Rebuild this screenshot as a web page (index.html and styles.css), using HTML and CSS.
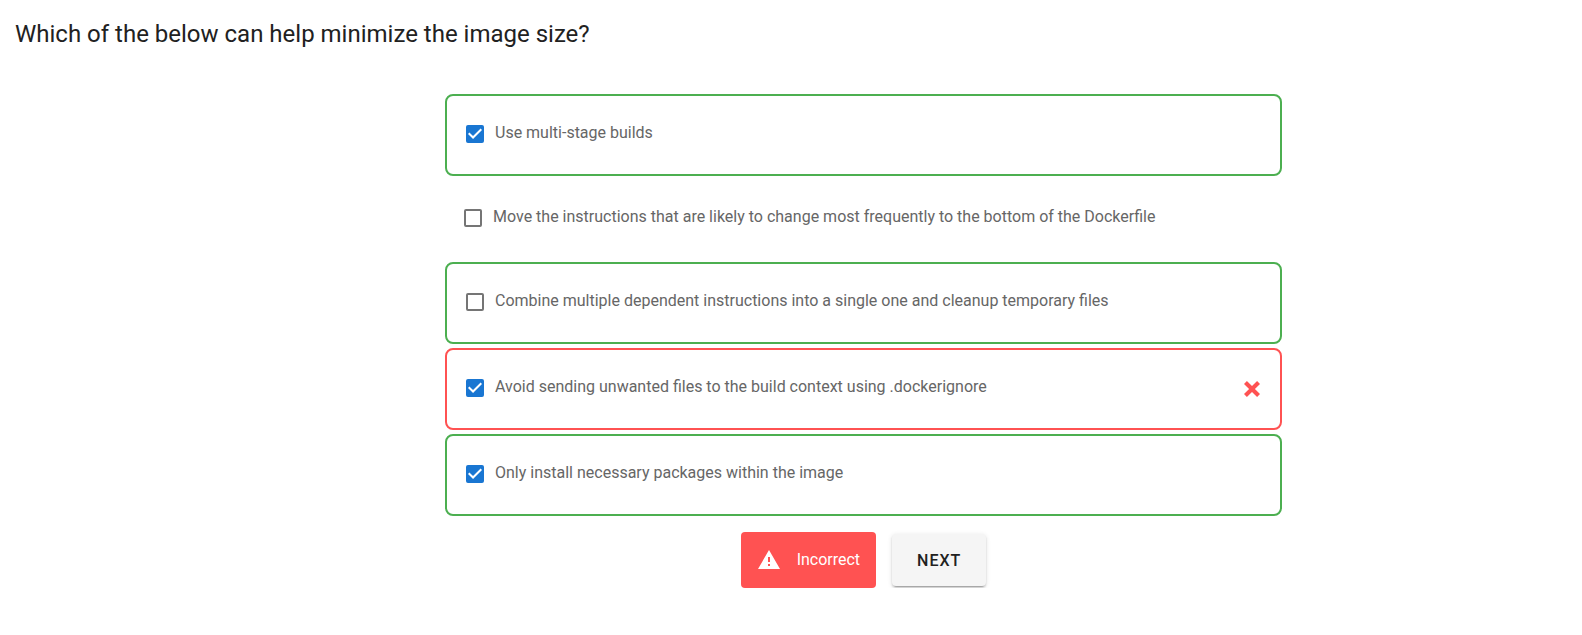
FILE: index.html
```html
<!DOCTYPE html>
<html lang="en">
<head>
<meta charset="utf-8">
<title>Quiz</title>
<link rel="stylesheet" href="styles.css">
</head>
<body>
<main class="quiz">
  <h1 class="question">Which of the below can help minimize the image size?</h1>
  <form class="answers">
    <label class="answer answer-right"><input class="tick" type="checkbox" checked><span class="text">Use multi-stage builds</span></label>
    <label class="answer"><input class="tick" type="checkbox"><span class="text">Move the instructions that are likely to change most frequently to the bottom of the Dockerfile</span></label>
    <label class="answer answer-right"><input class="tick" type="checkbox"><span class="text">Combine multiple dependent instructions into a single one and cleanup temporary files</span></label>
    <label class="answer answer-wrong"><input class="tick" type="checkbox" checked><span class="text">Avoid sending unwanted files to the build context using .dockerignore</span>
      <svg class="cross" viewBox="0 0 24 24" aria-hidden="true"><path d="M20 6.91L17.09 4L12 9.09L6.91 4L4 6.91L9.09 12L4 17.09L6.91 20L12 14.91L17.09 20L20 17.09L14.91 12L20 6.91Z"/></svg></label>
    <label class="answer answer-right"><input class="tick" type="checkbox" checked><span class="text">Only install necessary packages within the image</span></label>
    <div class="actions">
      <div class="alert" role="alert">
        <svg class="alert-icon" viewBox="0 0 24 24" aria-hidden="true"><path d="M13 14H11V9H13M13 18H11V16H13M1 21H23L12 2L1 21Z"/></svg>
        <span>Incorrect</span>
      </div>
      <button class="next" type="button">Next</button>
    </div>
  </form>
</main>
</body>
</html>
```
FILE: styles.css
```css
* {
  box-sizing: border-box;
}

body {
  margin: 0;
  background: #fff;
  color: #212121;
  font-family: Roboto, "Liberation Sans", sans-serif;
  font-size: 16px;
  line-height: 24px;
}

.quiz {
  display: grid;
  grid-template-columns: 445fr 837fr 300fr;
  row-gap: 44px;
  padding-top: 18px;
}

.question {
  grid-column: 1 / -1;
  margin: 0;
  padding: 0 15px;
  font-size: 24px;
  font-weight: 400;
  line-height: 32px;
}

.answers {
  grid-column: 2;
  display: flex;
  flex-direction: column;
  gap: 4px;
}

.answer {
  display: flex;
  align-items: flex-start;
  gap: 11px;
  padding: 26px 16px 26px 19px;
  border-radius: 8px;
  color: #666;
}

.answer-right {
  border: 2px solid #4caf50;
}

.answer-wrong {
  border: 2px solid #ff5252;
}

.text {
  flex: 1;
  padding-bottom: 4px;
  line-height: 22px;
}

.tick {
  appearance: none;
  width: 18px;
  height: 18px;
  margin: 3px 0 0;
  border: 2px solid #757575;
  border-radius: 2px;
  display: grid;
}

.tick:checked {
  border-color: #1976d2;
  background: #1976d2;
}

.tick:checked::before {
  content: "";
  background: #fff;
  clip-path: polygon(36% 65%, 90% 11%, 100% 21%, 36% 86%, 0 50%, 10% 40%);
}

.cross {
  width: 24px;
  height: 24px;
  margin-top: 1px;
  fill: #ff5252;
}

.actions {
  display: flex;
  justify-content: center;
  align-items: center;
  gap: 16px;
  padding-top: 12px;
}

.alert {
  display: flex;
  align-items: center;
  gap: 16px;
  padding: 16px;
  border-radius: 4px;
  background: #ff5252;
  color: #fff;
}

.alert-icon {
  width: 24px;
  height: 24px;
  fill: #fff;
}

.next {
  height: 52px;
  padding: 0 25px;
  border: 0;
  border-radius: 4px;
  background: #f5f5f5;
  color: #212121;
  font: 500 16px Roboto, "Liberation Sans", sans-serif;
  letter-spacing: 1px;
  text-transform: uppercase;
  box-shadow: 0 3px 1px -2px rgba(0, 0, 0, 0.2), 0 2px 2px 0 rgba(0, 0, 0, 0.14), 0 1px 5px 0 rgba(0, 0, 0, 0.12);
}
```
